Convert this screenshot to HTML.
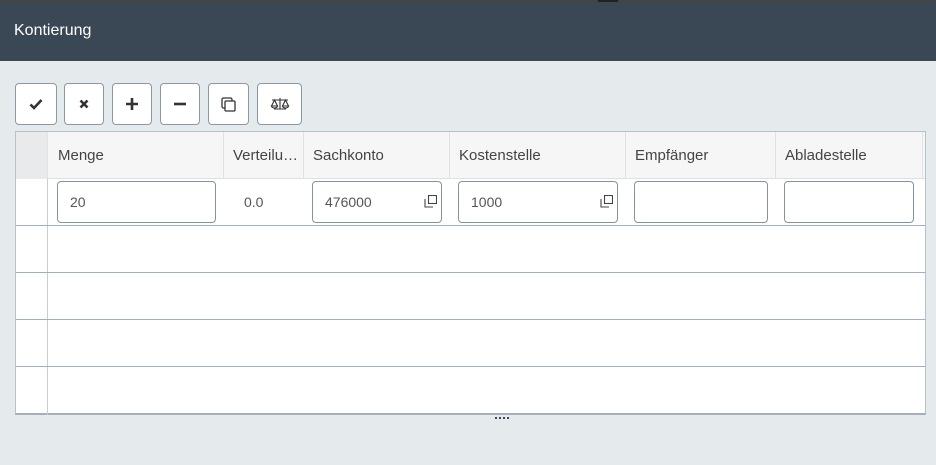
<!DOCTYPE html>
<html><head><style>
*{box-sizing:border-box;margin:0;padding:0}
body{width:936px;height:465px;background:#e5eaed;font-family:"Liberation Sans",sans-serif;position:relative;overflow:hidden}
.hdr{position:absolute;left:0;top:0;width:936px;height:61px;background:#3a4754;border-top:2px solid #444;color:#fff;font-size:16px;padding:20px 0 0 14px}
.btn{position:absolute;top:83px;height:42px;background:#fff;border:1px solid #8a98a6;border-radius:4px;display:flex;align-items:center;justify-content:center}
.tbl{position:absolute;left:15px;top:131px;width:911px;height:284px;background:#fff;border:1px solid #b9c1c8;border-bottom:2px solid #a7b0b8}
.hrow{position:absolute;left:0;top:0;width:909px;height:47px;background:#f6f6f6;border-bottom:1px solid #dde1e4}
.rh{position:absolute;left:0;top:0;width:32px;height:47px;background:#e8eaec;border-right:1px solid #c9ced3}
.c{position:absolute;top:0;height:47px;border-left:1px solid #e0e3e6;font-size:15px;color:#444;padding:15px 0 0 9px;white-space:nowrap;overflow:hidden}
.line{position:absolute;left:0;width:909px;height:1px;background:#a3b0bc}
.vl{position:absolute;left:31px;top:47px;width:1px;height:236px;background:#c9ced3}
.in{position:absolute;top:49px;height:42px;border:1px solid #8493a2;border-radius:4px;background:#fff;font-size:14px;color:#555;padding:12px 0 0 12px}
.ic{position:absolute;right:4px;top:13px}
</style></head><body>
<div class="hdr">Kontierung</div>
<div class="btn" style="left:15px;width:42px"><svg width="14" height="12" viewBox="0 0 14 12"><path d="M1.5 6.5l3.5 3.5 7.5-8" stroke="#333" stroke-width="2.6" fill="none"/></svg></div>
<div class="btn" style="left:64px;width:40px"><svg width="10" height="10"><path d="M1.5 1.5l7 7M8.5 1.5l-7 7" stroke="#333" stroke-width="2.6"/></svg></div>
<div class="btn" style="left:112px;width:40px"><svg width="12" height="12"><path d="M6 0v12M0 6h12" stroke="#333" stroke-width="2.6"/></svg></div>
<div class="btn" style="left:160px;width:40px"><svg width="12" height="12"><path d="M0 6h12" stroke="#333" stroke-width="2.6"/></svg></div>
<div class="btn" style="left:208px;width:41px"><svg width="15" height="15"><rect x="1" y="1" width="10" height="10" rx="1.5" fill="none" stroke="#333" stroke-width="1.3"/><rect x="4" y="4" width="10" height="10" rx="1" fill="#fff" stroke="#333" stroke-width="1.3"/></svg></div>
<div class="btn" style="left:257px;width:45px"><svg width="20" height="14" viewBox="0 0 20 14"><path d="M10 1v11M4 12h12M2 3h16M4.5 3l-3 6h6zM15.5 3l-3 6h6zM1.5 9a3 2 0 0 0 6 0M12.5 9a3 2 0 0 0 6 0" stroke="#333" stroke-width="1.1" fill="none"/></svg></div>
<div style="position:absolute;left:598px;top:0;width:20px;height:2px;background:#222"></div>
<div class="tbl">
<div class="hrow"><div class="rh"></div>
<div class="c" style="left:31px;width:176px;padding-left:10px">Menge</div>
<div class="c" style="left:207px;width:80px">Verteilu…</div>
<div class="c" style="left:287px;width:146px">Sachkonto</div>
<div class="c" style="left:433px;width:176px">Kostenstelle</div>
<div class="c" style="left:609px;width:150px">Empfänger</div>
<div class="c" style="left:759px;width:148px">Abladestelle</div>
<div class="c" style="left:906px;width:3px"></div>
</div>
<div class="vl"></div>
<div class="in" style="left:41px;width:159px">20</div>
<div style="position:absolute;left:228px;top:62px;font-size:14px;color:#555">0.0</div>
<div class="in" style="left:296px;width:130px">476000<svg class="ic" width="13" height="13"><path d="M1 4v8h8" fill="none" stroke="#444" stroke-width="1.1"/><rect x="4.5" y="0.5" width="8" height="8" fill="none" stroke="#444" stroke-width="1.1"/></svg></div>
<div class="in" style="left:442px;width:160px">1000<svg class="ic" width="13" height="13"><path d="M1 4v8h8" fill="none" stroke="#444" stroke-width="1.1"/><rect x="4.5" y="0.5" width="8" height="8" fill="none" stroke="#444" stroke-width="1.1"/></svg></div>
<div class="in" style="left:618px;width:134px"></div>
<div class="in" style="left:768px;width:130px"></div>
<div class="line" style="top:93px"></div>
<div class="line" style="top:140px"></div>
<div class="line" style="top:187px"></div>
<div class="line" style="top:234px"></div>
</div>
<div style="position:absolute;left:495px;top:417px;width:14px;height:2px;background:repeating-linear-gradient(90deg,#3a4754 0 2px,transparent 2px 4px)"></div>
</body></html>
